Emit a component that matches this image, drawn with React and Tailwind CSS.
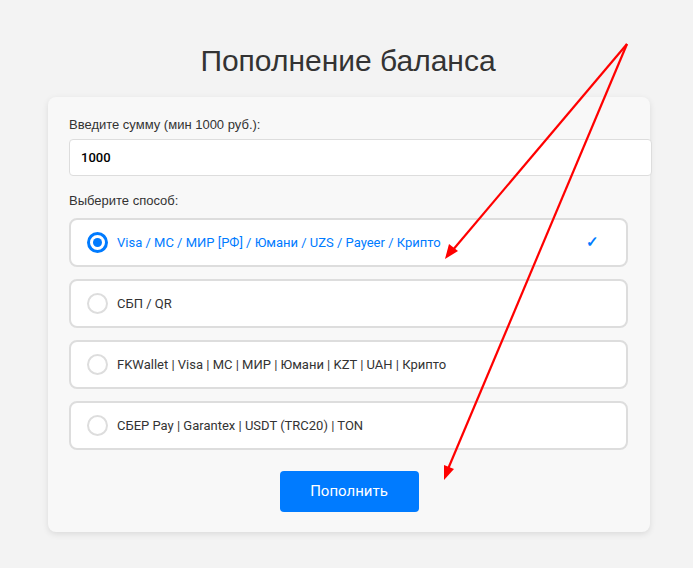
import React, { useState } from 'react';

const methods = [
  'Visa / MC / МИР [РФ] / Юмани / UZS / Payeer / Крипто',
  'СБП / QR',
  'FKWallet | Visa | MC | МИР | Юмани | KZT | UAH | Крипто',
  'СБЕР Pay | Garantex | USDT (TRC20) | TON',
];

function Radio({ checked }) {
  if (checked) {
    return (
      <span className="flex h-[21px] w-[21px] shrink-0 items-center justify-center rounded-full border-[3px] border-[#007bff] bg-white">
        <span className="h-[9px] w-[9px] rounded-full bg-[#007bff]" />
      </span>
    );
  }
  return <span className="h-[21px] w-[21px] shrink-0 rounded-full border-2 border-[#dddddd] bg-white" />;
}

export default function App() {
  const [amount, setAmount] = useState('1000');
  const [selected, setSelected] = useState(0);

  return (
    <div className="relative min-h-[568px] w-full overflow-hidden bg-[#f3f3f3] font-['Liberation_Sans',Arial,sans-serif]">
      <div className="flex flex-col items-center pt-[43px]">
        <h1 className="ml-[3px] text-[30px] leading-[36px] text-[#333333]">Пополнение баланса</h1>

        <div className="mt-[18px] ml-[5px] w-[602px] rounded-lg bg-[#f8f8f8] px-[21px] pt-[20px] pb-[20px] shadow-[0_2px_6px_rgba(0,0,0,0.1)]">
          <label className="block text-[13px] leading-[15px] text-[#333333]">Введите сумму (мин 1000 руб.):</label>
          <input
            value={amount}
            onChange={(e) => setAmount(e.target.value)}
            className="mt-[7px] block h-[37px] w-[583px] rounded border border-[#dddddd] bg-white px-[11px] text-[13px] font-medium text-black outline-none font-['Roboto',sans-serif]"
          />

          <div className="mt-[17px] text-[13px] leading-[15px] text-[#333333]">Выберите способ:</div>

          <div className="mt-[10px] flex flex-col gap-[12px]">
            {methods.map((m, i) => (
              <button
                key={i}
                type="button"
                onClick={() => setSelected(i)}
                className="flex h-[49px] w-[559px] items-center rounded-lg border-2 border-[#dddddd] bg-white pl-[16px] pr-[27px] text-left"
              >
                <Radio checked={selected === i} />
                <span
                  className={
                    selected === i
                      ? "ml-[9px] flex-1 text-[13px] text-[#007bff] font-['Roboto',sans-serif]"
                      : "ml-[9px] flex-1 text-[13px] text-[#333333] font-['Roboto',sans-serif]"
                  }
                >
                  {m}
                </span>
                {selected === i && <span className="text-[15px] font-bold text-[#007bff]">✓</span>}
              </button>
            ))}
          </div>

          <div className="mt-[21px] flex justify-center">
            <button
              type="button"
              className="h-[41px] w-[139px] rounded bg-[#007bff] text-[15px] text-white font-['Roboto',sans-serif]"
            >
              Пополнить
            </button>
          </div>
        </div>
      </div>

      <svg className="pointer-events-none absolute left-0 top-0" width="693" height="568" viewBox="0 0 693 568">
        <line x1="627" y1="44" x2="452" y2="251" stroke="#ff0000" strokeWidth="2.2" />
        <polygon points="445,259 449,244 458,251" fill="#ff0000" />
        <line x1="627" y1="44" x2="448" y2="469" stroke="#ff0000" strokeWidth="2.2" />
        <polygon points="444,480 444,465 454,469" fill="#ff0000" />
      </svg>
    </div>
  );
}
